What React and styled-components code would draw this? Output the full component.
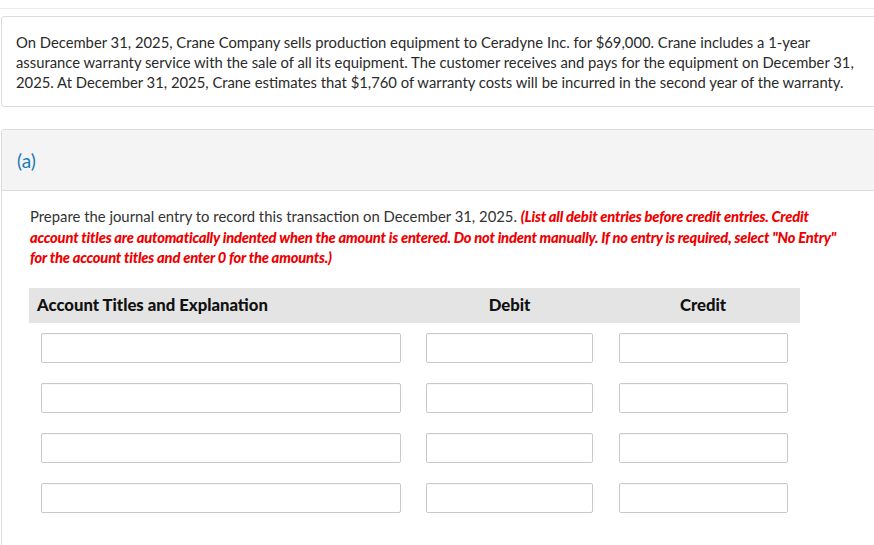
import React from "react";
import styled, { createGlobalStyle } from "styled-components";

const Global = createGlobalStyle`
  html, body { overflow: hidden; }
  body {
    margin: 8px 0 0 0;
    background: #fff;
    font-family: Lato, "Open Sans", Arial, sans-serif;
    color: #222;
  }
`;

const Page = styled.div`
  width: 884px;
  border-top: 1px solid #ececec;
  padding-top: 7px;
`;

const Card = styled.div`
  margin-left: 1px;
  border: 1px solid #dcdcdc;
  border-radius: 3px;
  background: #fff;
`;

const Intro = styled(Card)`
  padding: 15px 14px 14px 14px;
  font-size: 14.8px;
  line-height: 20px;
  color: #2a2a2a;
`;

const Section = styled(Card)`
  margin-top: 22px;
  min-height: 420px;
  border-bottom: none;
`;

const SectionHeader = styled.div`
  background: #f4f4f4;
  border-bottom: 1px solid #dcdcdc;
  height: 60px;
  display: flex;
  align-items: center;
  padding-left: 15px;
  font-size: 19px;
  color: #1c79b8;
`;

const SectionBody = styled.div`
  padding: 15px 32px 20px 28px;
`;

const Prompt = styled.p`
  margin: 0 0 20px 0;
  font-size: 14.85px;
  line-height: 20.5px;
  color: #333;
`;

const Note = styled.span`
  color: #ee0000;
  font-size: 14.7px;
  font-weight: 900;
  font-style: italic;
  letter-spacing: -0.2px;
`;

const Table = styled.div`
  width: 771px;
  margin-left: -1px;
`;

const Row = styled.div`
  display: grid;
  grid-template-columns: 384px 193px 194px;
`;

const HeadRow = styled(Row)`
  background: #e4e4e4;
  height: 35px;
  align-items: center;
`;

const Th = styled.div`
  font-size: 16.7px;
  font-weight: 900;
  color: #111;
  padding: 0 8px;
  text-align: ${(p) => p.$align || "left"};
`;

const Cell = styled.div`
  padding: 10px ${(p) => p.$pr || 12}px 10px ${(p) => p.$pl || 12}px;
`;

const Input = styled.input`
  display: block;
  box-sizing: border-box;
  width: 100%;
  height: 30px;
  border: 1px solid #c9c9c9;
  border-radius: 2px;
  background: #fff;
  font-family: inherit;
  font-size: 14px;
  outline: none;
  box-shadow: inset 0 1px 1px rgba(0,0,0,0.03);
`;

export default function App() {
  const rows = [0, 1, 2, 3];
  return (
    <>
      <Global />
      <Page>
        <Intro>
          On December 31, 2025, Crane Company sells production equipment to Ceradyne Inc. for $69,000. Crane includes a 1-year
          assurance warranty service with the sale of all its equipment. The customer receives and pays for the equipment on December 31,
          2025. At December 31, 2025, Crane estimates that $1,760 of warranty costs will be incurred in the second year of the warranty.
        </Intro>
        <Section>
          <SectionHeader>(a)</SectionHeader>
          <SectionBody>
            <Prompt>
              Prepare the journal entry to record this transaction on December 31, 2025.{" "}
              <Note>
                (List all debit entries before credit entries. Credit account titles are automatically indented when the amount is entered. Do not indent manually. If no entry is required, select "No Entry" for the account titles and enter 0 for the amounts.)
              </Note>
            </Prompt>
            <Table>
              <HeadRow>
                <Th>Account Titles and Explanation</Th>
                <Th $align="center">Debit</Th>
                <Th $align="center">Credit</Th>
              </HeadRow>
              {rows.map((r) => (
                <Row key={r}>
                  <Cell><Input type="text" /></Cell>
                  <Cell $pl={13} $pr={13}><Input type="text" /></Cell>
                  <Cell $pl={13} $pr={12}><Input type="text" /></Cell>
                </Row>
              ))}
            </Table>
          </SectionBody>
        </Section>
      </Page>
    </>
  );
}
